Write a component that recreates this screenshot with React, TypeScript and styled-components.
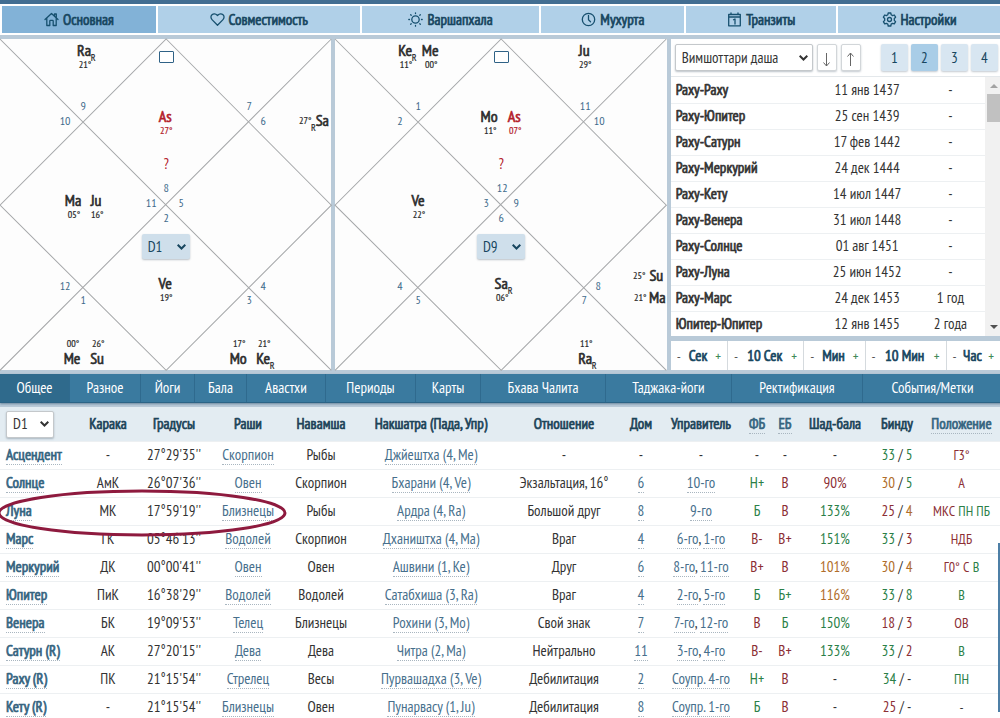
import React from "react";
import styled, { createGlobalStyle, css } from "styled-components";

const FONT = `"PT Sans Narrow", "Open Sans Condensed", "Roboto Condensed", "Liberation Sans Narrow", "Liberation Sans", sans-serif`;

const color = {
  backdrop: "#b9cad8",
  navy: "#17465f",
  link: "#476f8c",
  text: "#333333",
  good: "#2b7f48",
  bad: "#8c2f35",
  mid: "#b06d2a",
};

/* Emphasis thickens the regular cut, which keeps narrow labels narrow. */
const strong = css`
  font-weight: 400;
  -webkit-text-stroke: 0.045em currentColor;
`;

const GlobalStyle = createGlobalStyle`
  *, *::before, *::after { box-sizing: border-box; }
  body { margin: 0; background: #fff; color: ${color.text}; font: 15px/20px ${FONT}; overflow: hidden; }
  button, select, input { font: inherit; color: inherit; }
`;

const Page = styled.main`
  display: flex;
  flex-direction: column;
  gap: 4px;
  border-top: 4px solid #426e92;
  background: ${color.backdrop};
`;

/* ---------- main navigation ---------- */

const MainNav = styled.nav`
  display: grid;
  grid-template-columns: 154fr 202fr 178fr 143fr 150fr 162fr;
  gap: 2px;
  padding: 2px 0 2px 2px;
  background: #fff;
`;

const MainTab = styled.button<{ $active?: boolean }>`
  ${strong}
  display: flex;
  align-items: center;
  justify-content: center;
  gap: 4px;
  height: 27px;
  padding: 0;
  border: 0;
  background: ${(p) => (p.$active ? "#82b2d7" : "#b0d0e8")};
  color: ${color.navy};
`;

const Icon = styled.svg`
  width: 15px;
  height: 15px;
  fill: none;
  stroke: #17506f;
  stroke-width: 1.3;
  stroke-linecap: round;
  stroke-linejoin: round;
`;

const icons = {
  home: <path d="M1 7.500 7.500 1.500 14 7.500M2.800 6.500v7h3V9q0-.7.7-.7h2q.7 0 .7.7v4.500h3v-7M10.500 3.800V2h1.800v3.500" />,
  heart: <path d="M7.500 13.300 2 7.600C.6 6.200.6 4 2 2.700 3.400 1.400 5.700 1.500 7 3l.5.6L8 3c1.300-1.500 3.600-1.600 5-.3 1.400 1.300 1.400 3.500 0 4.900z" />,
  sun: (
    <>
      <circle cx="7.500" cy="7.500" r="3.700" />
      <path d="M7.500.8v.7M7.500 13.500v.7M.8 7.500h.7M13.500 7.500h.7M2.700 2.700l.5.500M11.800 11.800l.5.500M2.700 12.300l.5-.5M11.800 3.200l.5-.5" />
    </>
  ),
  clock: (
    <>
      <circle cx="7.500" cy="7.500" r="6.200" />
      <path d="M7.500 3.500v4.300l2 2" />
    </>
  ),
  calendar: <path d="M1.700 2.500h11.600v11.300H1.700zM1.700 5h11.600M4 1v1.500M11 1v1.500M6.500 7.800 8 7v5" />,
  gear: (
    <>
      <circle cx="7.500" cy="7.500" r="2" />
      <path d="M6.200 1h2.600l.4 1.800 1.400.8 1.700-.6 1.300 2.200-1.300 1.300v1.900l1.300 1.300-1.300 2.200-1.700-.6-1.400.8-.4 1.900H6.200l-.4-1.900-1.400-.8-1.700.6-1.300-2.200 1.300-1.300V6.500L1.400 5.200 2.700 3l1.700.6 1.400-.8z" />
    </>
  ),
};

const mainTabs: { label: string; icon: keyof typeof icons }[] = [
  { label: "Основная", icon: "home" },
  { label: "Совместимость", icon: "heart" },
  { label: "Варшапхала", icon: "sun" },
  { label: "Мухурта", icon: "clock" },
  { label: "Транзиты", icon: "calendar" },
  { label: "Настройки", icon: "gear" },
];

/* ---------- charts ---------- */

const Workspace = styled.section`
  display: grid;
  grid-template-columns: 331fr 331fr 329fr;
  gap: 4px;
`;

const ChartPanel = styled.div`
  position: relative;
  background: #fdfdfd;
`;

const ChartDrawing = styled.svg`
  display: block;
  width: 100%;
  height: auto;
  overflow: visible;
  font-family: ${FONT};
`;

const HouseNumber = styled.text`
  fill: #3f6b8c;
  font-size: 12px;
  text-anchor: middle;
`;

const PlanetName = styled.text<{ $accent?: boolean }>`
  fill: ${(p) => (p.$accent ? "#b3202a" : "#2b2b2b")};
  stroke: ${(p) => (p.$accent ? "#b3202a" : "#2b2b2b")};
  stroke-width: 0.6;
  font-size: 16px;
  text-anchor: middle;
`;

const Degree = styled.text<{ $accent?: boolean }>`
  fill: ${(p) => (p.$accent ? "#b3202a" : "#2b2b2b")};
  stroke: ${(p) => (p.$accent ? "#b3202a" : "#2b2b2b")};
  stroke-width: 0.2;
  font-size: 10px;
  text-anchor: middle;
`;

const Question = styled.text`
  fill: #b3202a;
  font-size: 15px;
  text-anchor: middle;
`;

const SelectBox = styled.span<{ $tone: "soft" | "plain"; $width: string }>`
  position: relative;
  display: inline-flex;
  width: ${(p) => p.$width};
  height: ${(p) => (p.$tone === "soft" ? "25px" : "27px")};
  border: ${(p) => (p.$tone === "soft" ? "0" : "1px solid #c4c8cb")};
  border-radius: 2px;
  background: ${(p) => (p.$tone === "soft" ? "#cfdfeb" : "#fff")};
  color: ${(p) => (p.$tone === "soft" ? color.navy : color.text)};
  box-shadow: 0 1px 2px rgba(60, 80, 100, 0.35);

  select {
    width: 100%;
    padding: 0 16px 0 6px;
    border: 0;
    background: transparent;
    appearance: none;
    -webkit-text-stroke: 0;
  }

  svg {
    position: absolute;
    right: 4px;
    top: 50%;
    margin-top: -3px;
    width: 9px;
    height: 6px;
    fill: none;
    stroke: currentColor;
    stroke-width: 2;
    pointer-events: none;
  }
`;

const ChartSelect = styled.div`
  position: absolute;
  left: 50%;
  top: 59%;
  transform: translateX(-50%);
  line-height: 0;

  select { line-height: 20px; }
`;

const ChartToggle = styled.button`
  position: absolute;
  left: 50%;
  top: 12px;
  width: 15px;
  height: 12px;
  margin-left: -7px;
  padding: 0;
  border: 1px solid #2f6286;
  border-radius: 1px;
  background: #fff;
`;

function Select({ label, value, width, tone = "plain" }: { label: string; value: string; width: string; tone?: "soft" | "plain" }) {
  return (
    <SelectBox $tone={tone} $width={width}>
      <select aria-label={label} defaultValue={value}>
        <option>{value}</option>
      </select>
      <svg viewBox="0 0 9 6" aria-hidden="true">
        <path d="M.7.8 4.500 4.500 8.300.8" />
      </svg>
    </SelectBox>
  );
}

type Planet = { name: string; deg: string; x: number; y: number; layout?: "below" | "above" | "left"; retro?: boolean; accent?: boolean };
type ChartData = { id: string; numbers: [string, number, number][]; planets: Planet[] };

const charts: ChartData[] = [
  {
    id: "D1",
    numbers: [
      ["9", 83, 71], ["10", 65, 86], ["7", 249, 71], ["6", 263, 86],
      ["8", 166, 153], ["11", 151, 168], ["5", 181, 168], ["2", 166, 183],
      ["12", 65, 251], ["1", 83, 265], ["4", 263, 251], ["3", 249, 265],
    ],
    planets: [
      { name: "Ra", deg: "21°", x: 84, y: 17, retro: true },
      { name: "As", deg: "27°", x: 165, y: 83, accent: true },
      { name: "Sa", deg: "27°", x: 322, y: 87, layout: "left", retro: true },
      { name: "Ma", deg: "05°", x: 73, y: 167 },
      { name: "Ju", deg: "16°", x: 96, y: 167 },
      { name: "Ve", deg: "19°", x: 165, y: 250 },
      { name: "Me", deg: "00°", x: 72, y: 325, layout: "above" },
      { name: "Su", deg: "26°", x: 97, y: 325, layout: "above" },
      { name: "Mo", deg: "17°", x: 238, y: 325, layout: "above" },
      { name: "Ke", deg: "21°", x: 263, y: 325, layout: "above", retro: true },
    ],
  },
  {
    id: "D9",
    numbers: [
      ["1", 83, 71], ["2", 65, 86], ["11", 250, 71], ["10", 264, 86],
      ["12", 167, 153], ["3", 151, 168], ["9", 181, 168], ["6", 166, 183],
      ["4", 65, 251], ["5", 83, 265], ["8", 263, 251], ["7", 249, 265],
    ],
    planets: [
      { name: "Ke", deg: "11°", x: 70, y: 17, retro: true },
      { name: "Me", deg: "00°", x: 95, y: 17 },
      { name: "Ju", deg: "29°", x: 249, y: 17 },
      { name: "Mo", deg: "11°", x: 154, y: 83 },
      { name: "As", deg: "07°", x: 179, y: 83, accent: true },
      { name: "Ve", deg: "22°", x: 83, y: 167 },
      { name: "Sa", deg: "06°", x: 166, y: 250, retro: true },
      { name: "Su", deg: "25°", x: 321, y: 242, layout: "left" },
      { name: "Ma", deg: "21°", x: 322, y: 264, layout: "left" },
      { name: "Ra", deg: "11°", x: 250, y: 325, layout: "above", retro: true },
    ],
  },
];

function PlanetMark({ name, deg, x, y, layout = "below", retro, accent }: Planet) {
  const degX = layout === "left" ? x - 17 : x + 1;
  const degY = layout === "below" ? y + 12 : layout === "above" ? y - 17 : y - 2;
  return (
    <g>
      <PlanetName $accent={accent} x={x} y={y}>{name}</PlanetName>
      <Degree $accent={accent} x={degX} y={degY}>{deg}</Degree>
      {retro && <Degree x={layout === "left" ? x - 9 : x + 9} y={y + 5}>R</Degree>}
    </g>
  );
}

function Chart({ data }: { data: ChartData }) {
  return (
    <ChartPanel>
      <ChartDrawing viewBox="0 0 331 331" role="img" aria-label={data.id}>
        <path d="M0 0 331 331M331 0 0 331M166 0 331 166 166 331 0 166Z" fill="none" stroke="#a5a7a9" />
        {data.numbers.map(([n, x, y]) => (
          <HouseNumber key={n} x={x} y={y}>{n}</HouseNumber>
        ))}
        {data.planets.map((p) => (
          <PlanetMark key={p.name} {...p} />
        ))}
        <Question x={166} y={130}>?</Question>
      </ChartDrawing>
      <ChartToggle type="button" aria-label="Развернуть" />
      <ChartSelect>
        <Select label="Карта" value={data.id} width="48px" tone="soft" />
      </ChartSelect>
    </ChartPanel>
  );
}

/* ---------- periods ---------- */

const PeriodPanel = styled.div`
  display: flex;
  flex-direction: column;
  gap: 5px;
  min-width: 0;
  overflow: hidden;
`;

const PeriodBox = styled.div`
  flex: 1;
  background: #fff;
`;

const PeriodTools = styled.div`
  display: flex;
  gap: 4px;
  height: 38px;
  padding: 5px 2px 0 4px;
  border-bottom: 1px solid #e4e8eb;
`;

const SquareButton = styled.button<{ $kind: "arrow" | "level" | "current" }>`
  width: ${(p) => (p.$kind === "arrow" ? "20px" : "27px")};
  height: 27px;
  padding: 0;
  border: ${(p) => (p.$kind === "arrow" ? "1px solid #d2d6d9" : "0")};
  border-radius: 2px;
  background: ${(p) => ({ arrow: "#fff", level: "#d8e6f1", current: "#a9cde7" })[p.$kind]};
  color: ${color.navy};
  box-shadow: 0 1px 2px rgba(60, 80, 100, 0.3);

  svg {
    display: block;
    width: 7px;
    height: 15px;
    margin: 3px auto 0;
    fill: none;
    stroke: #666;
  }
`;

const Levels = styled.div`
  display: flex;
  gap: 3px;
  margin-left: auto;
`;

const PeriodScroller = styled.div`
  display: flex;
  height: 259px;
  overflow: hidden;
`;

const PeriodTable = styled.table`
  flex: 1;
  height: max-content;
  border-collapse: collapse;
  table-layout: fixed;

  th, td {
    height: 26px;
    padding: 0;
    border-bottom: 1px solid #edf0f2;
    text-align: center;
  }
  th {
    ${strong}
    width: 47%;
    padding-left: 5px;
    text-align: left;
  }
  td:last-child { width: 22%; }
`;

const ScrollTrack = styled.div`
  display: flex;
  flex-direction: column;
  align-items: center;
  width: 15px;
  padding: 7px 0 7px 2px;
  background: #f1f1f1;

  svg { width: 8px; height: 4px; }
`;

const ScrollThumb = styled.div`
  width: 100%;
  height: 28px;
  margin: 6px 0 auto;
  background: #c1c1c1;
`;

const Steps = styled.div`
  display: grid;
  grid-template-columns: 57fr 76fr 61fr 81fr 54fr;
  gap: 1px;
  background: #d5dade;
`;

const Step = styled.div`
  ${strong}
  display: flex;
  align-items: center;
  justify-content: space-between;
  height: 29px;
  padding: 0 6px;
  background: #fff;
  color: ${color.navy};
  white-space: nowrap;
`;

const StepButton = styled.button<{ $plus?: boolean }>`
  padding: 0;
  border: 0;
  background: none;
  color: ${(p) => (p.$plus ? "#3f8a58" : "#555")};
  font-size: 14px;
  -webkit-text-stroke: 0;
`;

const periods = [
  ["Раху-Раху", "11 янв 1437", "-"],
  ["Раху-Юпитер", "25 сен 1439", "-"],
  ["Раху-Сатурн", "17 фев 1442", "-"],
  ["Раху-Меркурий", "24 дек 1444", "-"],
  ["Раху-Кету", "14 июл 1447", "-"],
  ["Раху-Венера", "31 июл 1448", "-"],
  ["Раху-Солнце", "01 авг 1451", "-"],
  ["Раху-Луна", "25 июн 1452", "-"],
  ["Раху-Марс", "24 дек 1453", "1 год"],
  ["Юпитер-Юпитер", "12 янв 1455", "2 года"],
];

/* ---------- details ---------- */

const DetailNav = styled.nav`
  display: grid;
  grid-template-columns: 70fr 71fr 54fr 52fr 79fr 90fr 65fr 125fr 126fr 131fr 140fr;
  margin-right: -3px;
  border-bottom: 1px solid #2c6486;
  box-shadow: 0 1px 2px rgba(30, 70, 100, 0.5);
`;

const DetailTab = styled.button<{ $active?: boolean }>`
  height: 28px;
  padding: 0;
  border: 0;
  border-right: 1px solid #2f6a8e;
  background: ${(p) => (p.$active ? "#2f6a8c" : "#3a7a9f")};
  color: #fff;
  white-space: nowrap;
`;

const detailTabs = ["Общее", "Разное", "Йоги", "Бала", "Авастхи", "Периоды", "Карты", "Бхава Чалита", "Таджака-йоги", "Ректификация", "События/Метки"];

const Details = styled.section`
  position: relative;
  background: #fff;
`;

const DetailTable = styled.table`
  width: 100%;
  border-collapse: collapse;
  table-layout: fixed;

  th, td {
    height: 28px;
    padding: 0;
    border-bottom: 1px solid #edf0f2;
    text-align: center;
    white-space: nowrap;
  }
  th { ${strong} }
  thead th {
    height: 34px;
    background: #e3ecf2;
    color: #1c4358;
  }
  th:first-child {
    padding-left: 6px;
    text-align: left;
  }
`;

const Term = styled.a`
  border-bottom: 1px dotted #a9b6c0;
  color: ${color.link};
  text-decoration: none;

  th & { color: #35647f; }
`;

const Tone = styled.span<{ $c: "good" | "bad" | "mid" | "text"; $small?: boolean }>`
  color: ${(p) => color[p.$c]};
  font-size: ${(p) => (p.$small ? "14px" : "15px")};
`;

const Marking = styled.svg`
  position: absolute;
  left: 0;
  top: 81px;
  width: 287px;
  height: 50px;
  fill: none;
  stroke: #8e1a3e;
  stroke-width: 3;
  pointer-events: none;
`;

const PageThumb = styled.div`
  position: absolute;
  right: 0;
  top: 136px;
  width: 2px;
  height: 169px;
  background: #4d7fa6;
`;

const columnWidths = [79, 58, 74, 74, 72, 148, 118, 36, 84, 28, 28, 72, 52, 77];
const headings = ["Карака", "Градусы", "Раши", "Навамша", "Накшатра (Пада, Упр)", "Отношение", "Дом", "Управитель"];

/* A leading letter sets the tone: g good, b bad, m middling, t plain. */
type Row = [string, string, string, string, string, string, string, string, string[], string, string, string, string[], string[]];

const rows: Row[] = [
  ["Асцендент", "-", "27°29'35''", "Скорпион", "Рыбы", "Джйештха (4, Me)", "-", "-", [], "t-", "t-", "t-", ["g33", "g5"], ["bГ3°"]],
  ["Солнце", "АмК", "26°07'36''", "Овен", "Скорпион", "Бхарани (4, Ve)", "Экзальтация, 16°", "6", ["10-го"], "gН+", "bВ", "b90%", ["m30", "g5"], ["bА"]],
  ["Луна", "МК", "17°59'19''", "Близнецы", "Рыбы", "Ардра (4, Ra)", "Большой друг", "8", ["9-го"], "gБ", "bВ", "g133%", ["b25", "m4"], ["bМКС", "gПН", "gПБ"]],
  ["Марс", "ГК", "05°46'13''", "Водолей", "Скорпион", "Дхаништха (4, Ma)", "Враг", "4", ["6-го", "1-го"], "bВ-", "bВ+", "g151%", ["g33", "b3"], ["bНДБ"]],
  ["Меркурий", "ДК", "00°00'41''", "Овен", "Овен", "Ашвини (1, Ke)", "Друг", "6", ["8-го", "11-го"], "bВ+", "bВ", "m101%", ["m30", "m4"], ["bГ0°", "bС", "gВ"]],
  ["Юпитер", "ПиК", "16°38'29''", "Водолей", "Водолей", "Сатабхиша (3, Ra)", "Враг", "4", ["2-го", "5-го"], "gБ", "gБ+", "m116%", ["g33", "g8"], ["gВ"]],
  ["Венера", "БК", "19°09'53''", "Телец", "Близнецы", "Рохини (3, Mo)", "Свой знак", "7", ["7-го", "12-го"], "bВ", "gБ", "g150%", ["b18", "b3"], ["bОВ"]],
  ["Сатурн (R)", "АК", "27°20'15''", "Дева", "Дева", "Читра (2, Ma)", "Нейтрально", "11", ["3-го", "4-го"], "bВ-", "bВ+", "g133%", ["g33", "b2"], ["gВ"]],
  ["Раху (R)", "ПК", "21°15'54''", "Стрелец", "Весы", "Пурвашадха (3, Ve)", "Дебилитация", "2", ["Соупр. 4-го"], "gН+", "bВ", "t-", ["g34", "t-"], ["gПН"]],
  ["Кету (R)", "-", "21°15'54''", "Близнецы", "Овен", "Пунарвасу (1, Ju)", "Дебилитация", "8", ["Соупр. 1-го"], "gБ", "bВ", "t-", ["b25", "t-"], ["t-"]],
];

const tones = { g: "good", b: "bad", m: "mid", t: "text" } as const;

function Toned({ value, small }: { value: string; small?: boolean }) {
  return <Tone $c={tones[value[0] as keyof typeof tones]} $small={small}>{value.slice(1)}</Tone>;
}

function DetailRow({ row }: { row: Row }) {
  const [name, karaka, degrees, rashi, navamsha, nakshatra, relation, house, rulers, fb, eb, shad, bindu, position] = row;
  return (
    <tr>
      <th scope="row"><Term href="#">{name}</Term></th>
      <td>{karaka}</td>
      <td>{degrees}</td>
      <td><Term href="#">{rashi}</Term></td>
      <td>{navamsha}</td>
      <td><Term href="#">{nakshatra}</Term></td>
      <td>{relation}</td>
      <td>{house === "-" ? house : <Term href="#">{house}</Term>}</td>
      <td>
        {rulers.length === 0 && "-"}
        {rulers.map((r, i) => (
          <React.Fragment key={r}>{i > 0 && ", "}<Term href="#">{r}</Term></React.Fragment>
        ))}
      </td>
      <td><Toned value={fb} /></td>
      <td><Toned value={eb} /></td>
      <td><Toned value={shad} /></td>
      <td><Toned value={bindu[0]} /> / <Toned value={bindu[1]} /></td>
      <td>
        {position.map((p, i) => (
          <React.Fragment key={p}>{i > 0 && " "}<Toned value={p} small /></React.Fragment>
        ))}
      </td>
    </tr>
  );
}

export default function App() {
  return (
    <>
      <GlobalStyle />
      <Page>
        <MainNav>
          {mainTabs.map((t, i) => (
            <MainTab key={t.label} type="button" $active={i === 0}>
              <Icon viewBox="0 0 15 15" aria-hidden="true">{icons[t.icon]}</Icon>
              {t.label}
            </MainTab>
          ))}
        </MainNav>

        <Workspace>
          {charts.map((c) => <Chart key={c.id} data={c} />)}
          <PeriodPanel>
            <PeriodBox>
              <PeriodTools>
                <Select label="Система периодов" value="Вимшоттари даша" width="138px" />
                <SquareButton type="button" $kind="arrow" aria-label="Вниз">
                  <svg viewBox="0 0 7 15" aria-hidden="true"><path d="M3.500 1v13M.5 10.500l3 3.500 3-3.500" /></svg>
                </SquareButton>
                <SquareButton type="button" $kind="arrow" aria-label="Вверх">
                  <svg viewBox="0 0 7 15" aria-hidden="true"><path d="M3.500 14V1M.5 4.500l3-3.500 3 3.500" /></svg>
                </SquareButton>
                <Levels>
                  {["1", "2", "3", "4"].map((n) => (
                    <SquareButton key={n} type="button" $kind={n === "2" ? "current" : "level"}>{n}</SquareButton>
                  ))}
                </Levels>
              </PeriodTools>
              <PeriodScroller>
                <PeriodTable>
                  <tbody>
                    {periods.map(([name, date, age]) => (
                      <tr key={name}><th scope="row">{name}</th><td>{date}</td><td>{age}</td></tr>
                    ))}
                  </tbody>
                </PeriodTable>
                <ScrollTrack>
                  <svg viewBox="0 0 8 4" aria-hidden="true"><path d="M0 4 4 0l4 4z" fill="#a3a3a3" /></svg>
                  <ScrollThumb />
                  <svg viewBox="0 0 8 4" aria-hidden="true"><path d="M0 0l4 4 4-4z" fill="#505050" /></svg>
                </ScrollTrack>
              </PeriodScroller>
            </PeriodBox>
            <Steps>
              {["Сек", "10 Сек", "Мин", "10 Мин", "Час"].map((s) => (
                <Step key={s}>
                  <StepButton type="button">-</StepButton>
                  {s}
                  <StepButton type="button" $plus>+</StepButton>
                </Step>
              ))}
            </Steps>
          </PeriodPanel>
        </Workspace>

        <DetailNav>
          {detailTabs.map((t, i) => (
            <DetailTab key={t} type="button" $active={i === 0}>{t}</DetailTab>
          ))}
        </DetailNav>

        <Details>
          <DetailTable>
            <colgroup>
              {columnWidths.map((w, i) => <col key={i} style={{ width: `${w / 10}%` }} />)}
            </colgroup>
            <thead>
              <tr>
                <th scope="col"><Select label="Карта таблицы" value="D1" width="48px" /></th>
                {headings.map((h) => <th key={h} scope="col">{h}</th>)}
                <th scope="col"><Term href="#">ФБ</Term></th>
                <th scope="col"><Term href="#">ЕБ</Term></th>
                <th scope="col">Шад-бала</th>
                <th scope="col">Бинду</th>
                <th scope="col"><Term href="#">Положение</Term></th>
              </tr>
            </thead>
            <tbody>
              {rows.map((r) => <DetailRow key={r[0]} row={r} />)}
            </tbody>
          </DetailTable>
          <Marking viewBox="0 0 287 50" aria-hidden="true">
            <ellipse cx="142" cy="25" rx="143" ry="22" />
          </Marking>
          <PageThumb />
        </Details>
      </Page>
    </>
  );
}
